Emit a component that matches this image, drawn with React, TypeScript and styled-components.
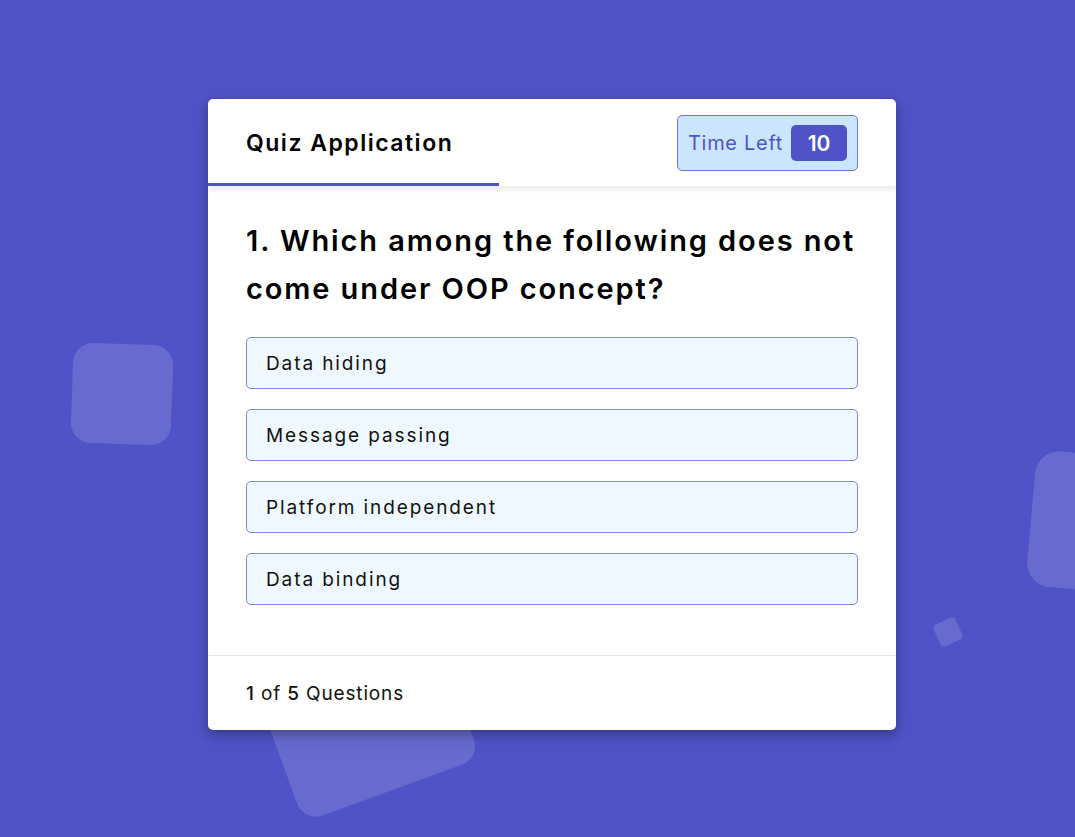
import React from "react";
import styled, { createGlobalStyle } from "styled-components";

const Global = createGlobalStyle`
  html, body { margin: 0; padding: 0; }
  body {
    background: #4f53c7;
    font-family: "Inter", "Noto Sans", sans-serif;
    width: 1075px;
    height: 837px;
    overflow: hidden;
  }
`;

const Page = styled.div`
  position: relative;
  width: 1075px;
  height: 837px;
  overflow: hidden;
  display: flex;
  justify-content: center;
  padding-top: 99px;
  padding-left: 29px;
  box-sizing: border-box;
`;

const Shape = styled.div<{ $x: number; $y: number; $w: number; $h: number; $r: number; $rad: number }>`
  position: absolute;
  left: ${(p) => p.$x}px;
  top: ${(p) => p.$y}px;
  width: ${(p) => p.$w}px;
  height: ${(p) => p.$h}px;
  border-radius: ${(p) => p.$rad}px;
  transform: rotate(${(p) => p.$r}deg);
  background: rgba(255, 255, 255, 0.14);
`;

const Card = styled.div`
  position: relative;
  z-index: 1;
  width: 688px;
  height: 631px;
  background: #fff;
  border-radius: 5px;
  box-shadow: 0 4px 8px 0 rgba(0, 0, 0, 0.2), 0 6px 20px 0 rgba(0, 0, 0, 0.15);
  display: flex;
  flex-direction: column;
  overflow: hidden;
`;

const Header = styled.header`
  position: relative;
  height: 87px;
  padding: 0 38px;
  display: flex;
  align-items: center;
  justify-content: space-between;
  box-shadow: 0 3px 5px 1px rgba(0, 0, 0, 0.08);
  flex-shrink: 0;
`;

const Title = styled.div`
  font-size: 23px;
  font-weight: 600;
  color: #000;
  letter-spacing: 1.5px;
`;

const Timer = styled.div`
  width: 181px;
  height: 56px;
  box-sizing: border-box;
  background: #cce5ff;
  border: 1px solid #6f74dd;
  border-radius: 5px;
  display: flex;
  align-items: center;
  justify-content: space-between;
  padding: 0 10px 0 10px;
  margin-top: 1px;
`;

const TimerLabel = styled.span`
  font-size: 20px;
  font-weight: 400;
  letter-spacing: 0.7px;
  color: #4f53c7;
`;

const TimerSec = styled.span`
  width: 56px;
  height: 36px;
  border-radius: 5px;
  background: #4f53c7;
  color: #fff;
  font-size: 21px;
  font-weight: 600;
  display: flex;
  align-items: center;
  justify-content: center;
`;

const ProgressLine = styled.div`
  position: absolute;
  left: 0;
  bottom: 0;
  height: 3px;
  background: #4f53c7;
`;

const Body = styled.section`
  flex: 1;
  padding: 31px 38px 0 38px;
`;

const Question = styled.div`
  font-size: 29px;
  font-weight: 600;
  line-height: 48px;
  letter-spacing: 1.9px;
  color: #000;
`;

const Options = styled.div`
  margin-top: 24px;
  display: flex;
  flex-direction: column;
  gap: 20px;
`;

const Option = styled.div`
  height: 52px;
  box-sizing: border-box;
  background: #f0f8ff;
  border: 1px solid #7f84e3;
  border-radius: 5px;
  padding: 0 19px;
  display: flex;
  align-items: center;
  font-size: 19px;
  letter-spacing: 1.9px;
  color: #111;
`;

const Footer = styled.footer`
  height: 74px;
  border-top: 1px solid #e6e6e6;
  padding: 0 38px;
  display: flex;
  align-items: center;
  font-size: 19px;
  letter-spacing: 0.85px;
  color: #111;
  flex-shrink: 0;
  white-space: pre;
`;

const Strong = styled.span`
  font-weight: 500;
`;

const options = ["Data hiding", "Message passing", "Platform independent", "Data binding"];

export default function App() {
  return (
    <>
      <Global />
      <Page>
        <Shape $x={72} $y={344} $w={100} $h={100} $r={2} $rad={20} />
        <Shape $x={1031} $y={454} $w={110} $h={136} $r={5} $rad={24} />
        <Shape $x={936} $y={620} $w={24} $h={24} $r={-25} $rad={4} />
        <Shape $x={276} $y={664} $w={188} $h={130} $r={-20} $rad={20} />
        <Card>
          <Header>
            <Title>Quiz Application</Title>
            <Timer>
              <TimerLabel>Time Left</TimerLabel>
              <TimerSec>10</TimerSec>
            </Timer>
            <ProgressLine style={{ width: "291px" }} />
          </Header>
          <Body>
            <Question>1. Which among the following does not come under OOP concept?</Question>
            <Options>
              {options.map((o) => (
                <Option key={o}>{o}</Option>
              ))}
            </Options>
          </Body>
          <Footer>
            <Strong>1</Strong>{" of "}<Strong>5</Strong>{" Questions"}
          </Footer>
        </Card>
      </Page>
    </>
  );
}
